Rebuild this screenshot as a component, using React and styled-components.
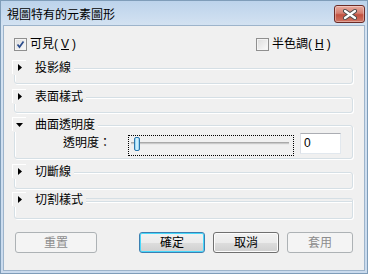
import React from "react";
import styled, { createGlobalStyle } from "styled-components";

const GlobalStyle = createGlobalStyle`
  html, body {
    margin: 0;
    padding: 0;
    background: #ffffff;
  }
  body {
    font-family: "Liberation Sans", "Noto Sans CJK TC", sans-serif;
    font-size: 12px;
    color: #000;
  }
  * {
    box-sizing: border-box;
  }
`;

const Window = styled.div`
  width: 368px;
  height: 274px;
  display: flex;
  flex-direction: column;
  border: 1px solid #7f9db9;
  background: linear-gradient(#bcd3eb, #d5e3f2 26px, #cadbee);
  padding: 0 2px 2px;
`;

const TitleBar = styled.div`
  height: 24px;
  display: flex;
  align-items: center;
  justify-content: space-between;
  padding: 2px 0 0 4px;
`;

const Title = styled.span`
  font-size: 12px;
  line-height: 14px;
  padding-top: 1px;
`;

const CloseButton = styled.div`
  width: 31px;
  height: 18px;
  border: 1px solid #6b2b27;
  border-radius: 3px;
  background: linear-gradient(#e7aa9e, #d47f71 45%, #c2503f 55%, #cf7564);
  box-shadow: inset 0 0 0 1px rgba(255, 255, 255, 0.35);
  display: flex;
  align-items: center;
  justify-content: center;
`;

const Client = styled.div`
  flex: 1;
  display: flex;
  flex-direction: column;
  border: 1px solid #9db4cb;
  background: #f0f0f0;
  padding: 0 11px 0 10px;
`;

const CheckRow = styled.div`
  margin-top: 11px;
  height: 14px;
  display: flex;
  align-items: center;
`;

const CheckLabel = styled.label`
  display: flex;
  align-items: center;
  gap: 3px;
  line-height: 14px;
  width: ${(p) => (p.$w ? `${p.$w}px` : "auto")};
  flex: ${(p) => (p.$grow ? 1 : "none")};
`;

const Box = styled.span`
  width: 13px;
  height: 13px;
  border: 1px solid #8f8f8f;
  background: linear-gradient(135deg, #dcdcdc, #fbfbfb);
  box-shadow: inset 0 0 0 1px #f4f4f4;
  display: flex;
  align-items: center;
  justify-content: center;
`;

const Group = styled.fieldset`
  margin: ${(p) => p.$top}px 0 0;
  padding: 0;
  min-width: 0;
  border: 1px solid #d5dfe5;
  border-top-width: ${(p) => (p.$double ? "4px" : "1px")};
  border-top-style: ${(p) => (p.$double ? "double" : "solid")};
  border-radius: 3px;
  box-shadow: inset 1px 1px 0 #ffffff, 1px 1px 0 #ffffff;
`;

const Legend = styled.legend`
  margin-left: -3px;
  padding: 0 3px 0 0;
  height: 14px;
  background: #f0f0f0;
`;

const LegendInner = styled.span`
  display: flex;
  align-items: center;
  height: 14px;
  line-height: 14px;
`;

const Toggle = styled.span`
  width: 14px;
  height: 14px;
  margin-top: -2px;
  border-top: 1px solid #ffffff;
  border-left: 1px solid #ffffff;
  display: flex;
  align-items: center;
  justify-content: center;
  margin-right: 9px;
`;

const GroupBody = styled.div`
  height: ${(p) => p.$h}px;
`;

const SliderRow = styled.div`
  display: flex;
  align-items: flex-start;
  padding: 1px 0 0 48px;
`;

const FieldLabel = styled.span`
  width: 65px;
  line-height: 14px;
  margin-top: 3px;
`;

const Slider = styled.div`
  position: relative;
  width: 166px;
  height: 21px;
  margin-top: 2px;
  border: 1px dotted #000;
`;

const Track = styled.div`
  margin: 6px 4px 0 2px;
  height: 3px;
  border-top: 1px solid #a9a9a9;
  border-bottom: 1px solid #e9e9e9;
  background: #c9c9c9;
`;

const Thumb = styled.div`
  position: absolute;
  left: 5px;
  top: 1px;
  width: 6px;
  height: 14px;
  border: 1px solid #2e77ad;
  border-radius: 2px;
  background: linear-gradient(90deg, #7fcdf1, #e6f8ff 50%, #7fcdf1);
`;

const Input = styled.div`
  width: 41px;
  height: 21px;
  margin-left: 6px;
  border: 1px solid #e2e8ee;
  border-top-color: #abadb3;
  border-left-color: #dbdfe6;
  background: #ffffff;
  padding: 2px 0 0 3px;
  font-size: 12px;
  line-height: 14px;
`;

const ButtonRow = styled.div`
  margin-top: 13px;
  display: flex;
  justify-content: space-between;
  padding-left: 1px;
`;

const ButtonGroup = styled.div`
  display: flex;
  gap: 8px;
`;

const Button = styled.button`
  width: ${(p) => p.$w}px;
  height: 21px;
  padding: 0;
  font-family: "Liberation Sans", "Noto Sans CJK TC", sans-serif;
  font-size: 12px;
  line-height: 14px;
  border-radius: 3px;
  color: ${(p) => (p.disabled ? "#8d8d8d" : "#000")};
  border: 1px solid
    ${(p) => (p.disabled ? "#adb2b5" : p.$default ? "#3c7fb1" : "#707070")};
  background: ${(p) =>
    p.disabled
      ? "#f4f4f4"
      : "linear-gradient(#f2f2f2 0%, #ebebeb 50%, #dddddd 51%, #cfcfcf 100%)"};
  box-shadow: ${(p) =>
    p.disabled
      ? "none"
      : p.$default
      ? "inset 0 0 0 1px #48d8fb"
      : "inset 0 0 0 1px #fcfcfc"};
`;

const Arrow = ({ down }) =>
  down ? (
    <svg width="7" height="4" viewBox="0 0 7 4">
      <path d="M0 0H7L3.5 4Z" fill="#000" />
    </svg>
  ) : (
    <svg width="4" height="7" viewBox="0 0 4 7">
      <path d="M0 0V7L4 3.5Z" fill="#000" />
    </svg>
  );

const Section = ({ title, top, h, open, double, children }) => (
  <Group $top={top} $double={double}>
    <Legend>
      <LegendInner>
        <Toggle>
          <Arrow down={open} />
        </Toggle>
        {title}
      </LegendInner>
    </Legend>
    <GroupBody $h={h}>{children}</GroupBody>
  </Group>
);

const Check = ({ checked }) => (
  <Box>
    {checked && (
      <svg width="9" height="9" viewBox="0 0 9 9">
        <path d="M1.5 4.5L3.5 7L7.5 1.5" fill="none" stroke="#2b4c8c" strokeWidth="1.7" />
      </svg>
    )}
  </Box>
);

export default function App() {
  return (
    <>
      <GlobalStyle />
      <Window>
        <TitleBar>
          <Title>視圖特有的元素圖形</Title>
          <CloseButton>
            <svg width="14" height="11" viewBox="0 0 14 11">
              <path d="M2 2L12 9M12 2L2 9" stroke="#4a4a4a" strokeWidth="4" strokeLinecap="round" />
              <path d="M2 2L12 9M12 2L2 9" stroke="#ffffff" strokeWidth="2.2" strokeLinecap="round" />
            </svg>
          </CloseButton>
        </TitleBar>
        <Client>
          <CheckRow>
            <CheckLabel $grow>
              <Check checked />
              可見(<u>V</u>)
            </CheckLabel>
            <CheckLabel $w={97}>
              <Check />
              半色調(<u>H</u>)
            </CheckLabel>
          </CheckRow>

          <Section title="投影線" top={10} h={8} />
          <Section title="表面樣式" top={6} h={8} />
          <Section title="曲面透明度" top={5} h={26} open>
            <SliderRow>
              <FieldLabel>透明度：</FieldLabel>
              <Slider>
                <Track />
                <Thumb />
              </Slider>
              <Input>0</Input>
            </SliderRow>
          </Section>
          <Section title="切斷線" top={6} h={9} />
          <Section title="切割樣式" top={4} h={11} double />

          <ButtonRow>
            <Button $w={82} disabled>
              重置
            </Button>
            <ButtonGroup>
              <Button $w={66} $default>
                確定
              </Button>
              <Button $w={66}>取消</Button>
              <Button $w={66} disabled>
                套用
              </Button>
            </ButtonGroup>
          </ButtonRow>
        </Client>
      </Window>
    </>
  );
}
